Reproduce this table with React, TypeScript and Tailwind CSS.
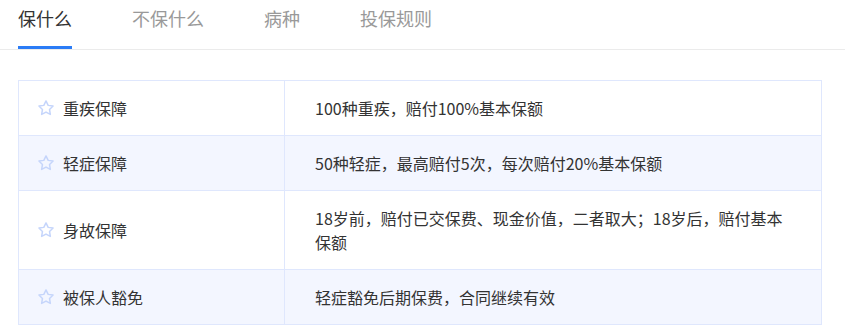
const TABS = ["保什么", "不保什么", "病种", "投保规则"];

const ROWS = [
  { title: "重疾保障", desc: "100种重疾，赔付100%基本保额" },
  { title: "轻症保障", desc: "50种轻症，最高赔付5次，每次赔付20%基本保额" },
  { title: "身故保障", desc: "18岁前，赔付已交保费、现金价值，二者取大；18岁后，赔付基本保额" },
  { title: "被保人豁免", desc: "轻症豁免后期保费，合同继续有效" },
];

function Star() {
  return (
    <svg width="18" height="18" viewBox="0 0 24 24" fill="none" stroke="#c5d5fb" strokeWidth="2" strokeLinejoin="round" className="shrink-0">
      <path d="M12 2.6l2.9 5.9 6.5.9-4.7 4.6 1.1 6.5L12 17.4l-5.8 3.1 1.1-6.5-4.7-4.6 6.5-.9z" />
    </svg>
  );
}

export default function App() {
  return (
    <div className="w-[845px] h-[334px] bg-white text-[#333]" style={{ fontFamily: '"Noto Sans CJK SC", "Noto Sans", sans-serif' }}>
      <div className="flex gap-[60px] px-[18px] border-b border-[#ebebeb]">
        {TABS.map((t, i) => (
          <div key={t} className={`h-[49px] pt-[5px] text-[18px] leading-[27px] border-b-[3px] ${i === 0 ? "border-[#2b7cf6] text-[#333]" : "border-transparent text-[#999]"}`}>
            {t}
          </div>
        ))}
      </div>

      <div className="px-[18px] pt-[30px]">
        <table className="w-[804px] border-collapse text-[16px] leading-6">
          <tbody>
            {ROWS.map((r, i) => (
              <tr key={r.title} className={i % 2 === 1 ? "bg-[#f3f6ff]" : "bg-white"}>
                <td className="w-[266px] border border-[#dfe7fd] pl-[18px] py-[15px] align-middle">
                  <div className="flex items-center gap-[8px]">
                    <Star />
                    <span>{r.title}</span>
                  </div>
                </td>
                <td className="border border-[#dfe7fd] pl-[30px] pr-[30px] py-[15px]">{r.desc}</td>
              </tr>
            ))}
          </tbody>
        </table>
      </div>
    </div>
  );
}
